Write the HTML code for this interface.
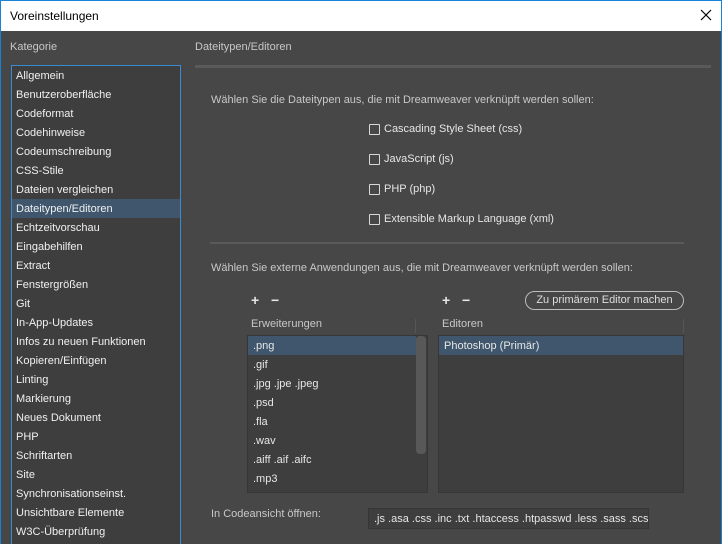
<!DOCTYPE html>
<html style="width:722px;height:544px;overflow:hidden"><head><meta charset="utf-8"><style>
*{margin:0;padding:0;box-sizing:border-box}
body{width:722px;height:544px;overflow:hidden;background:#474747;font-family:"Liberation Sans",sans-serif;font-size:11px;color:#e6e6e6;position:relative}
.a{position:absolute;white-space:nowrap}
#tb{left:0;top:0;width:722px;height:31px;background:#fff;border:1px solid #1883d7;border-bottom:none;color:#000;font-size:12px}
#lb{left:0;top:31px;width:1px;height:513px;background:#1883d7}
#rb{left:721px;top:31px;width:1px;height:513px;background:#1883d7}
.g{color:#c8c8c8}
#cat{left:11px;top:65px;width:170px;height:479px;background:#3e3e3e;border:1px solid #3b8ad0;border-bottom:none;overflow:hidden}
#cat div{height:19px;line-height:20px;padding-left:4px;color:#f0f0f0}
#cat .s{background:#3f566d}
.cb{width:11px;height:11px;border:1px solid #d8d8d8;border-radius:1px}
.list{background:#3e3e3e;border:1px solid #363636}
.list div{height:19px;line-height:20px;padding-left:5px}
.sel{background:#3f566d}
</style></head><body>
<div class="a" id="tb"><span class="a" style="left:9px;top:8px">Voreinstellungen</span>
<svg class="a" style="left:699px;top:8px" width="12" height="12"><path d="M1 1L11 11M11 1L1 11" stroke="#000" stroke-width="1.2"/></svg></div>
<div class="a" id="lb"></div><div class="a" id="rb"></div>
<div class="a g" style="left:10px;top:41px">Kategorie</div>
<div class="a g" style="left:195px;top:41px">Dateitypen/Editoren</div>
<div class="a" style="left:195px;top:65px;width:516px;height:3px;background:#5a5a5a"></div>
<div class="a" id="cat">
<div>Allgemein</div><div>Benutzeroberfläche</div><div>Codeformat</div><div>Codehinweise</div><div>Codeumschreibung</div><div>CSS-Stile</div><div>Dateien vergleichen</div><div class="s">Dateitypen/Editoren</div><div>Echtzeitvorschau</div><div>Eingabehilfen</div><div>Extract</div><div>Fenstergrößen</div><div>Git</div><div>In-App-Updates</div><div>Infos zu neuen Funktionen</div><div>Kopieren/Einfügen</div><div>Linting</div><div>Markierung</div><div>Neues Dokument</div><div>PHP</div><div>Schriftarten</div><div>Site</div><div>Synchronisationseinst.</div><div>Unsichtbare Elemente</div><div>W3C-Überprüfung</div>
</div>
<div class="a g" style="left:211px;top:94px">Wählen Sie die Dateitypen aus, die mit Dreamweaver verknüpft werden sollen:</div>
<div class="a cb" style="left:369px;top:124px"></div><div class="a" style="left:384px;top:123px">Cascading Style Sheet (css)</div>
<div class="a cb" style="left:369px;top:154px"></div><div class="a" style="left:384px;top:153px">JavaScript (js)</div>
<div class="a cb" style="left:369px;top:184px"></div><div class="a" style="left:384px;top:183px">PHP (php)</div>
<div class="a cb" style="left:369px;top:214px"></div><div class="a" style="left:384px;top:213px">Extensible Markup Language (xml)</div>
<div class="a" style="left:210px;top:242px;width:474px;height:2px;background:#5a5a5a"></div>
<div class="a g" style="left:211px;top:262px">Wählen Sie externe Anwendungen aus, die mit Dreamweaver verknüpft werden sollen:</div>
<div class="a" style="left:251px;top:292px;font-size:14px;font-weight:bold">+</div><div class="a" style="left:271px;top:292px;font-size:14px;font-weight:bold">−</div>
<div class="a" style="left:442px;top:292px;font-size:14px;font-weight:bold">+</div><div class="a" style="left:462px;top:292px;font-size:14px;font-weight:bold">−</div>
<div class="a" style="left:525px;top:291px;width:159px;height:19px;border:1px solid #bdbdbd;border-radius:10px;text-align:center;line-height:17px;color:#ddd">Zu primärem Editor machen</div>
<div class="a g" style="left:251px;top:318px">Erweiterungen</div>
<div class="a" style="left:415px;top:319px;width:1px;height:14px;background:#555"></div>
<div class="a g" style="left:442px;top:318px">Editoren</div>
<div class="a" style="left:683px;top:319px;width:1px;height:14px;background:#555"></div>
<div class="a list" style="left:247px;top:335px;width:181px;height:158px">
<div class="sel" style="width:168px">.png</div><div>.gif</div><div>.jpg .jpe .jpeg</div><div>.psd</div><div>.fla</div><div>.wav</div><div>.aiff .aif .aifc</div><div>.mp3</div></div>
<div class="a" style="left:416px;top:336px;width:10px;height:118px;background:#585858;border-radius:4px"></div>
<div class="a list" style="left:438px;top:335px;width:246px;height:158px"><div class="sel">Photoshop (Primär)</div></div>
<div class="a g" style="left:211px;top:508px">In Codeansicht öffnen:</div>
<div class="a" style="left:368px;top:508px;width:281px;height:21px;background:#3e3e3e;border:1px solid #363636;overflow:hidden;padding-left:5px;line-height:20px">.js .asa .css .inc .txt .htaccess .htpasswd .less .sass .scss</div>
</body></html>
